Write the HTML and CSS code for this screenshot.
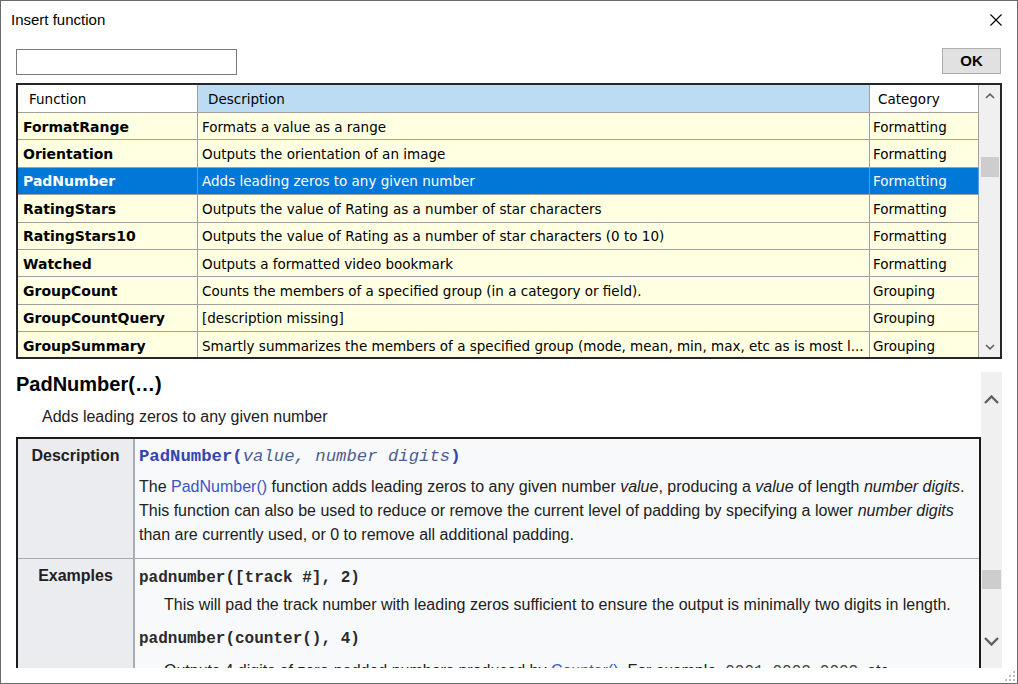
FILE: index.html
```html
<!DOCTYPE html>
<html>
<head>
<meta charset="utf-8">
<title>Insert function</title>
<link rel="stylesheet" href="styles.css">
</head>
<body>
<div class="window">
  <div class="titlebar">
    <span class="title">Insert function</span>
    <svg class="close" viewBox="0 0 12 12"><path d="M0.5 0.5 L11.5 11.5 M11.5 0.5 L0.5 11.5" stroke="#000" stroke-width="1.1" fill="none"/></svg>
  </div>
  <div class="toolbar">
    <input class="search" type="text">
    <button class="ok">OK</button>
  </div>
  <div class="grid">
    <div class="gtable">
      <div class="row head">
        <div class="c fn">Function</div>
        <div class="c desc sorted">Description</div>
        <div class="c cat">Category</div>
      </div>
      <div class="row"><div class="c fn">FormatRange</div><div class="c desc">Formats a value as a range</div><div class="c cat">Formatting</div></div>
      <div class="row"><div class="c fn">Orientation</div><div class="c desc">Outputs the orientation of an image</div><div class="c cat">Formatting</div></div>
      <div class="row sel"><div class="c fn">PadNumber</div><div class="c desc">Adds leading zeros to any given number</div><div class="c cat">Formatting</div></div>
      <div class="row"><div class="c fn">RatingStars</div><div class="c desc">Outputs the value of Rating as a number of star characters</div><div class="c cat">Formatting</div></div>
      <div class="row"><div class="c fn">RatingStars10</div><div class="c desc">Outputs the value of Rating as a number of star characters (0 to 10)</div><div class="c cat">Formatting</div></div>
      <div class="row"><div class="c fn">Watched</div><div class="c desc">Outputs a formatted video bookmark</div><div class="c cat">Formatting</div></div>
      <div class="row"><div class="c fn">GroupCount</div><div class="c desc">Counts the members of a specified group (in a category or field).</div><div class="c cat">Grouping</div></div>
      <div class="row"><div class="c fn">GroupCountQuery</div><div class="c desc">[description missing]</div><div class="c cat">Grouping</div></div>
      <div class="row"><div class="c fn">GroupSummary</div><div class="c desc">Smartly summarizes the members of a specified group (mode, mean, min, max, etc as is most l...</div><div class="c cat">Grouping</div></div>
    </div>
    <div class="vs vs-small">
      <div class="arr"><svg width="10" height="6" viewBox="0 0 10 6"><polyline points="1,5 5,1.2 9,5" fill="none" stroke="#606060" stroke-width="1.6"/></svg></div>
      <div class="thumb"></div>
      <div class="arr arr-down"><svg width="10" height="6" viewBox="0 0 10 6"><polyline points="1,1 5,4.8 9,1" fill="none" stroke="#606060" stroke-width="1.6"/></svg></div>
    </div>
  </div>
  <div class="doc">
    <div class="doc-content">
      <h2 class="doc-title">PadNumber(…)</h2>
      <p class="summary">Adds leading zeros to any given number</p>
      <div class="info">
        <div class="ih first">Description</div>
        <div class="ib first">
          <div class="sig"><b>PadNumber(</b><i>value, number digits</i><b>)</b></div>
          <p class="para">The <span class="link">PadNumber()</span> function adds leading zeros to any given number <i>value</i>, producing a <i>value</i> of length <i>number digits</i>. This function can also be used to reduce or remove the current level of padding by specifying a lower <i>number digits</i> than are currently used, or 0 to remove all additional padding.</p>
        </div>
        <div class="ih">Examples</div>
        <div class="ib ex">
          <div class="ex-code">padnumber([track #], 2)</div>
          <p class="ex-desc">This will pad the track number with leading zeros sufficient to ensure the output is minimally two digits in length.</p>
          <div class="ex-code ex-code2">padnumber(counter(), 4)</div>
          <p class="ex-desc ex-desc2">Outputs 4 digits of zero-padded numbers produced by <span class="link">Counter()</span>. For example, <span class="mono">0001</span>, <span class="mono">0002</span>, <span class="mono">0003</span>, etc.</p>
        </div>
      </div>
    </div>
    <div class="vs vs-big">
      <div class="arr-big"><svg width="15" height="9" viewBox="0 0 15 9"><polyline points="1,8 7.5,1.5 14,8" fill="none" stroke="#606060" stroke-width="2.4"/></svg></div>
      <div class="thumb-big"></div>
      <div class="arr-big arr-down"><svg width="15" height="9" viewBox="0 0 15 9"><polyline points="1,1 7.5,7.5 14,1" fill="none" stroke="#606060" stroke-width="2.4"/></svg></div>
    </div>
  </div>
  <svg class="grip" width="10" height="10" viewBox="0 0 10 10">
    <rect x="8" y="0" width="2" height="2" fill="#bdbdbd"/>
    <rect x="4" y="4" width="2" height="2" fill="#bdbdbd"/>
    <rect x="8" y="4" width="2" height="2" fill="#bdbdbd"/>
    <rect x="0" y="8" width="2" height="2" fill="#bdbdbd"/>
    <rect x="4" y="8" width="2" height="2" fill="#bdbdbd"/>
    <rect x="8" y="8" width="2" height="2" fill="#bdbdbd"/>
  </svg>
</div>
</body>
</html>
```
FILE: styles.css
```css
html, body {
  margin: 0;
  padding: 0;
  background: #ffffff;
}

.window {
  position: relative;
  width: 1018px;
  height: 684px;
  box-sizing: border-box;
  border: 1px solid #6a6a6a;
  background: #ffffff;
  display: flex;
  flex-direction: column;
  overflow: hidden;
  font-family: "Liberation Sans", Arial, sans-serif;
  color: #000;
}

/* title bar */
.titlebar {
  flex: none;
  height: 47px;
  display: flex;
  justify-content: space-between;
  align-items: flex-start;
  padding: 0 15px 0 10px;
}
.title {
  margin-top: 9px;
  font-size: 15px;
  line-height: 20px;
}
.close {
  margin-top: 13px;
  width: 12px;
  height: 12px;
}

/* toolbar */
.toolbar {
  flex: none;
  height: 27px;
  display: flex;
  justify-content: space-between;
  align-items: flex-start;
  padding: 0 16px 0 15px;
}
.search {
  width: 221px;
  height: 26px;
  margin: 1px 0 0 0;
  padding: 0;
  box-sizing: border-box;
  border: 1px solid #7a7a7a;
  background: #fff;
  outline: none;
}
.ok {
  width: 59px;
  height: 26px;
  padding: 0 0 1px 0;
  box-sizing: border-box;
  background: #e1e1e1;
  border: 1px solid #adadad;
  font-family: "Liberation Sans", Arial, sans-serif;
  font-weight: bold;
  font-size: 15px;
  color: #000;
}

/* function grid */
.grid {
  flex: none;
  margin: 8px 15px 0 15px;
  height: 276px;
  box-sizing: border-box;
  border: 2px solid #262626;
  display: flex;
}
.gtable {
  width: 961px;
  overflow: hidden;
  background: #ffffe1;
}
.row {
  display: grid;
  grid-template-columns: 180px 672px 109px;
  height: 27.375px;
}
.row.head {
  height: 28px;
  background: #ffffff;
}
.c {
  box-sizing: border-box;
  border-right: 1px solid #a0a0a0;
  border-bottom: 1px solid #a0a0a0;
  display: flex;
  align-items: center;
  padding-top: 1px;
  white-space: nowrap;
  overflow: hidden;
  font-family: "DejaVu Sans", Verdana, sans-serif;
  font-size: 13.5px;
}
.row .fn {
  padding-left: 5px;
  font-weight: bold;
  font-size: 14px;
}
.row .desc {
  padding-left: 4px;
}
.row .cat {
  padding-left: 3px;
}
.row.head .fn {
  font-weight: normal;
  font-size: 13.5px;
  padding-left: 11px;
}
.row.head .desc {
  padding-left: 10px;
}
.row.head .cat {
  padding-left: 8px;
}
.row.head .sorted {
  background: #bcdcf4;
}
.row.sel {
  background: #0078d7;
  color: #ffffff;
}
.row.sel .c {
  border-right-color: #4f9fe2;
}

/* scrollbars */
.vs {
  flex: none;
  width: 21px;
  background: #f0f0f0;
  display: flex;
  flex-direction: column;
}
.arr {
  height: 21px;
  display: flex;
  align-items: center;
  justify-content: center;
}
.thumb {
  height: 20px;
  margin: 51px 1px 0 2px;
  background: #cdcdcd;
}
.arr-down {
  margin-top: auto;
}
.arr-big {
  height: 54px;
  display: flex;
  align-items: center;
  justify-content: center;
}
.thumb-big {
  height: 19px;
  margin: 144px 1px 0 1px;
  background: #cdcdcd;
}

/* documentation pane */
.doc {
  flex: none;
  margin: 13px 15px 0 15px;
  height: 296px;
  display: flex;
}
.doc-content {
  flex: 1;
  overflow: hidden;
  background: #ffffff;
  color: #202122;
}
.doc-title {
  margin: 0;
  font-size: 20px;
  line-height: 24px;
  font-weight: bold;
  color: #000;
}
.summary {
  margin: 11px 0 0 26px;
  font-size: 16px;
  line-height: 20px;
}
.info {
  margin-top: 10px;
  border: 2px solid #1b1b1b;
  border-bottom: none;
  display: grid;
  grid-template-columns: 117px 1fr;
  font-size: 16px;
  line-height: 24px;
}
.ih {
  background: #eaecf0;
  border-right: 2px solid #a9adb5;
  text-align: center;
  font-weight: bold;
  padding-top: 5px;
}
.ib {
  background: #f8f9fa;
  padding: 6px 4px 11px 4px;
}
.ih.first, .ib.first {
  border-bottom: 1px solid #a2a9b1;
}
.sig {
  font-family: "Liberation Mono", "Courier New", monospace;
  font-size: 17.3px;
  line-height: 24px;
  color: #3545b0;
  white-space: nowrap;
}
.sig b {
  font-weight: bold;
}
.sig i {
  font-weight: normal;
  font-style: italic;
  color: #4f5d92;
}
.para {
  margin: 6px 0 0 0;
}
.link {
  color: #3a55c4;
}
.ib.ex {
  padding-top: 7px;
}
.ex-code {
  font-family: "Liberation Mono", "Courier New", monospace;
  font-weight: bold;
  font-size: 16px;
  line-height: 24px;
  color: #2a2a2a;
  white-space: nowrap;
}
.ex-code2 {
  margin-top: 10px;
}
.ex-desc {
  margin: 3px 0 0 25px;
  white-space: nowrap;
}
.ex-desc2 {
  margin-top: 8px;
}
.mono {
  font-family: "Liberation Mono", "Courier New", monospace;
  color: #444;
}

/* resize grip */
.grip {
  position: absolute;
  right: 2px;
  bottom: 2px;
}
```
